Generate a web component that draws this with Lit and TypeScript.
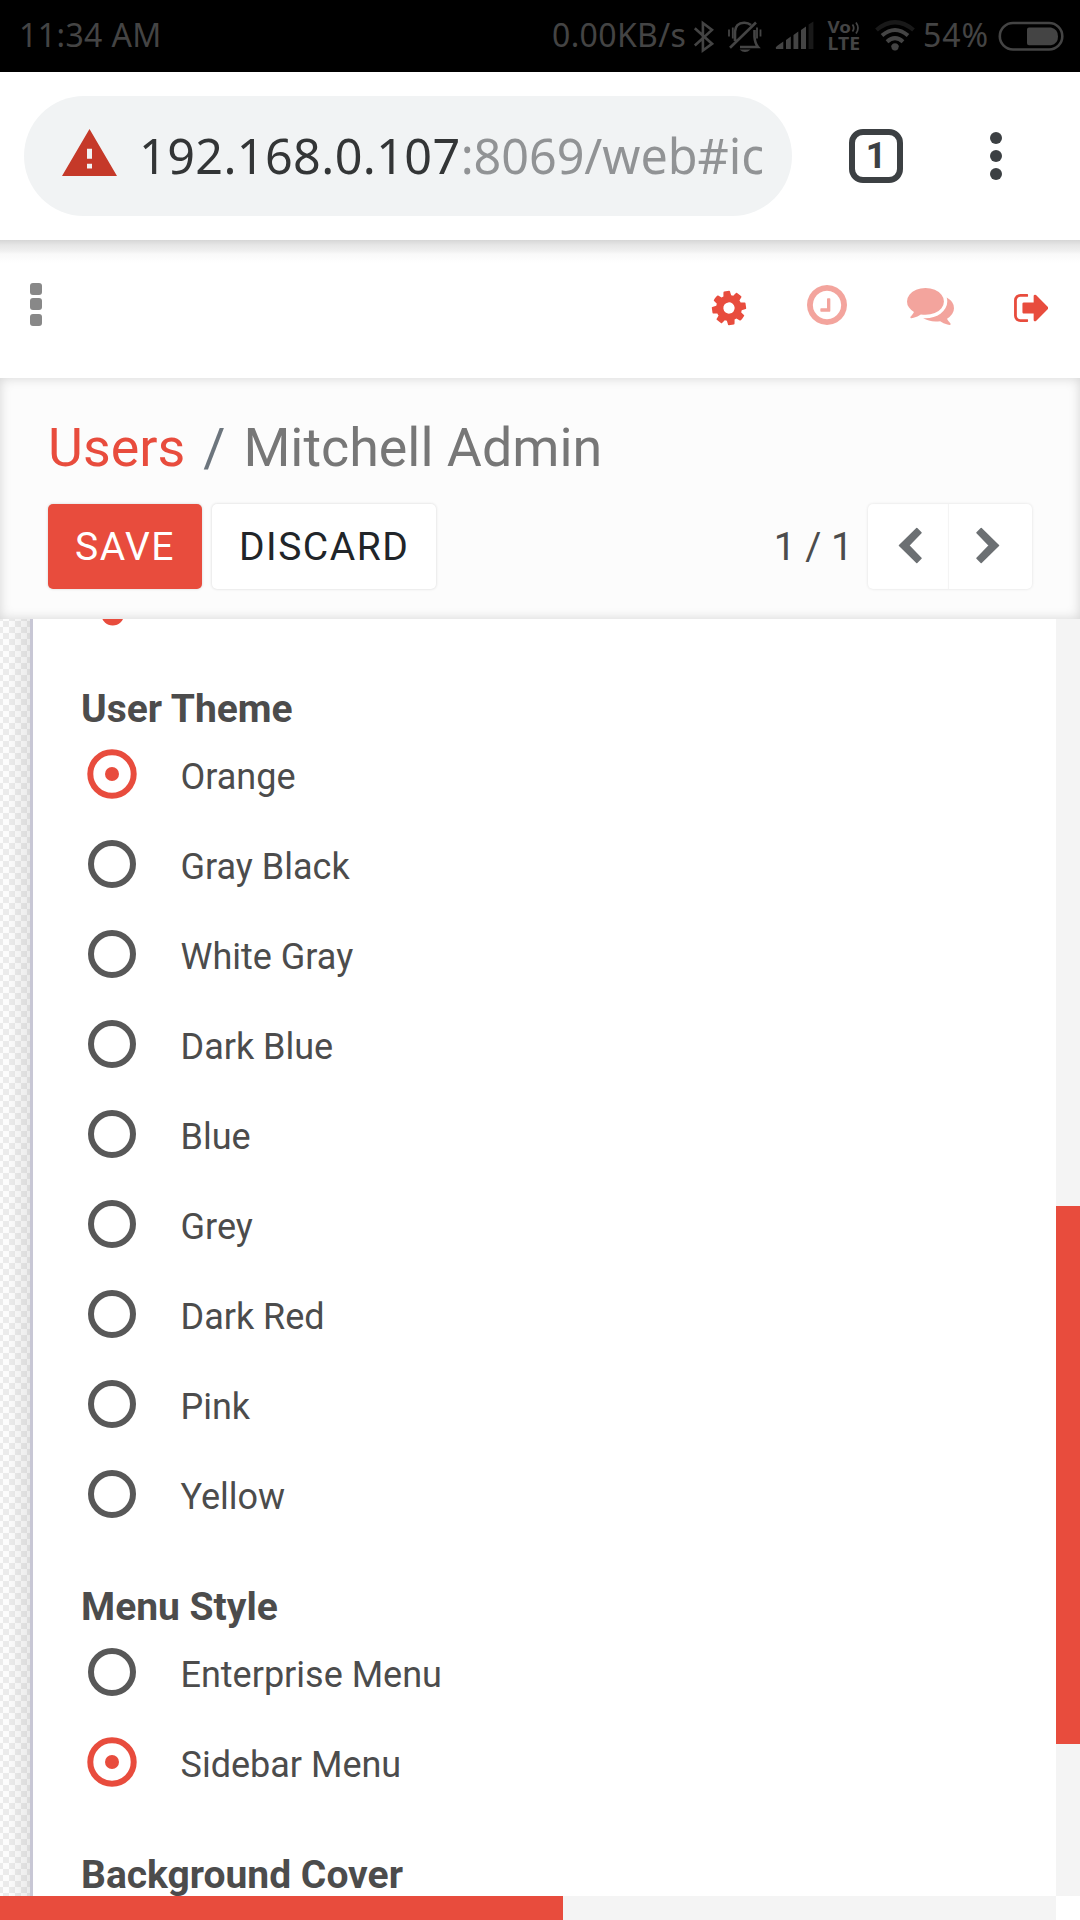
import { LitElement, html, css, svg, nothing } from "lit";
import { customElement, property } from "lit/decorators.js";

const COG =
  "M1024 640q0 106-75 181t-181 75-181-75-75-181 75-181 181-75 181 75 75 181zm512-109v222q0 12-8 23t-20 13l-185 28q-19 54-39 91 35 50 107 138 10 12 10 25t-9 23q-27 37-99 108t-94 71q-12 0-26-9l-138-108q-44 23-91 38-16 136-29 186-7 28-36 28h-222q-14 0-24.5-8.5t-11.5-21.5l-28-184q-49-16-90-37l-141 107q-10 9-25 9-14 0-25-11-126-114-165-168-7-10-7-23 0-12 8-23 15-21 51-66.5t54-70.5q-27-50-41-99l-183-27q-13-2-21-12.5t-8-23.5v-222q0-12 8-23t19-13l186-28q14-46 39-92-40-57-107-138-10-12-10-24 0-10 9-23 26-36 98.5-107.5t94.5-71.5q13 0 26 10l138 107q44-23 91-38 16-136 29-186 7-28 36-28h222q14 0 24.5 8.5t11.5 21.5l28 184q49 16 90 37l142-107q9-9 24-9 13 0 25 10 129 119 165 170 7 8 7 22 0 12-8 23-15 21-51 66.5t-54 70.5q26 50 41 98l183 28q13 2 21 12.5t8 23.5z";
const CLOCK =
  "M896 416v448q0 14-9 23t-23 9h-320q-14 0-23-9t-9-23v-64q0-14 9-23t23-9h224v-352q0-14 9-23t23-9h64q14 0 23 9t9 23zm416 224q0-148-73-273t-198-198-273-73-273 73-198 198-73 273 73 273 198 198 273 73 273-73 198-198 73-273zm224 0q0 209-103 385.5t-279.5 279.5-385.5 103-385.5-103-279.5-279.5-103-385.5 103-385.5 279.5-279.5 385.5-103 385.5 103 279.5 279.5 103 385.5z";
const COMMENTS =
  "M1408 768q0 139-94 257t-256.5 186.5-353.5 68.5q-86 0-176-16-124 88-278 128-36 9-86 16h-3q-11 0-20.5-8t-11.5-21q-1-3-1-6.5t.5-6.5 2-6l2.5-5 3.5-5.5 4-5 4.5-5 4-4.5q5-6 23-25t26-29.5 22.5-29 25-38.5 20.5-44q-124-72-195-177t-71-224q0-139 94-257t256.5-186.5 353.5-68.5 353.5 68.5 256.5 186.5 94 257zm384 256q0 120-71 224.5t-195 176.5q10 24 20.5 44t25 38.5 22.5 29 26 29.5 23 25q1 1 4 4.5t4.5 5 4 5 3.5 5.5l2.5 5 2 6 .5 6.5-1 6.5q-3 14-13 22t-22 7q-50-7-86-16-154-40-278-128-90 16-176 16-271 0-472-132 58 4 88 4 161 0 309-45t264-129q125-92 192-212t67-254q0-77-23-152 129 71 204 178t75 230z";
const SIGN_OUT =
  "M640 1440q0 4 1 20t.5 26.5-3 23.5-10 19.5-20.5 6.5h-320q-119 0-203.5-84.5t-84.5-203.5v-704q0-119 84.5-203.5t203.5-84.5h320q13 0 22.5 9.5t9.5 22.5q0 4 1 20t.5 26.5-3 23.5-10 19.5-20.5 6.5h-320q-66 0-113 47t-47 113v704q0 66 47 113t113 47h312l11.5 1 11.5 3 8 5.5 7 9 2 13.5zm928-544q0 26-19 45l-544 544q-19 19-45 19t-45-19-19-45v-288h-448q-26 0-45-19t-19-45v-384q0-26 19-45t45-19h448v-288q0-26 19-45t45-19 45 19l544 544q19 19 19 45z";

@customElement("status-bar")
class StatusBar extends LitElement {
  static styles = css`
    :host {
      display: flex;
      align-items: center;
      height: 72px;
      box-sizing: border-box;
      padding: 0 16px 0 19px;
      background: #000;
      color: #444;
      font: 32px/40px "Noto Sans", sans-serif;
      white-space: pre;
    }
    .time { flex: 1; padding-bottom: 3px; letter-spacing: 0.4px; }
    .speed { width: 141px; padding-bottom: 3px; letter-spacing: 0.35px; }
    .percent { width: 67px; padding-bottom: 3px; letter-spacing: 1px; }
    svg { display: block; flex: none; }
    .bell { margin-left: 14px; }
    .signal { margin-left: 13px; }
    .volte { margin-left: 13px; }
    .wifi { margin-left: 15px; }
    .percent { margin-left: 8px; }
    .battery { margin-left: 8px; }
    .vo { font: bold 16px "Noto Sans", sans-serif; }
    .lte { font: bold 17.5px "Noto Sans", sans-serif; }
  `;
  render() {
    return html`
      <span class="time">11:34 AM</span>
      <span class="speed">0.00KB/s</span>
      <svg width="21" height="72" viewBox="694 0 21 72" fill="none" stroke="#444" stroke-width="2.6">
        <path d="M695.8 28.2 713 43.8 703.9 50.5V23l9.1 6.9-17.2 15.6" />
      </svg>
      <svg class="bell" width="34" height="72" viewBox="729 0 34 72" fill="none" stroke="#444" stroke-width="2.6">
        <path d="M736 41V31.5Q736.5 23 745 22.7 749 22.500 752 25M755.5 30V37Q756 43.500 759 47H741M731 47.800 757 22.500" />
        <path d="M730 29.500v7M733.800 27.500v11M758 27.500v11M761.500 29.500v7" stroke-width="1.800" />
        <path d="M740.5 49.500h11q-5.500 5-11 0z" fill="#444" stroke="none" />
      </svg>
      <svg class="signal" width="39" height="72" viewBox="776 0 39 72" fill="#444">
        <path d="M777 49q-1-1.500 1-3l6.300-4.500V49zM787 49V40l4.800-3.500V49zM794.500 49V35l4.800-3.500V49zM802 49V30l5-3.500V49z" />
        <path d="M809.600 49V24.500l4.800-3V49z" fill="#191919" />
      </svg>
      <svg class="volte" width="33" height="72" viewBox="828 0 33 72" fill="#444">
        <text class="vo" x="828.500" y="33" textLength="23.500" lengthAdjust="spacingAndGlyphs">Vo</text>
        <text class="lte" x="828.500" y="49.700" textLength="32.500" lengthAdjust="spacingAndGlyphs">LTE</text>
        <path d="M853.500 24.500q2.500 3.500 0 7M857 22.500q4 5.500 0 11" fill="none" stroke="#444" stroke-width="1.700" />
      </svg>
      <svg class="wifi" width="40" height="72" viewBox="875.500 0 40 72" fill="none" stroke="#444" stroke-width="4">
        <path d="M877 31.500Q895.500 16 914 31.500" stroke="#191919" stroke-width="4.200" transform="translate(0 -1.500)" />
        <path d="M882.500 36.500Q895.500 25.500 908.500 36.500" transform="translate(0 -1)" />
        <path d="M887.500 41.700Q895.500 34.500 903.500 41.700" />
        <path d="M891.500 46q4-2.800 8 0l-4 4.500z" fill="#444" stroke="none" />
        <circle cx="895.500" cy="46.800" r="3.600" fill="#444" stroke="none" />
      </svg>
      <span class="percent">54%</span>
      <svg class="battery" width="66" height="72" viewBox="998 0 66 72">
        <rect x="999.800" y="23" width="62.500" height="26.500" rx="13.200" fill="none" stroke="#444" stroke-width="2.600" />
        <path d="M1029 27.500h22q7 1.500 7 9t-7 8.700h-22q-2 0-2-2v-13.700q0-2 2-2z" fill="#444" />
      </svg>
    `;
  }
}

@customElement("browser-bar")
class BrowserBar extends LitElement {
  static styles = css`
    :host {
      display: flex;
      align-items: center;
      height: 168px;
      box-sizing: border-box;
      padding-left: 24px;
      background: #fff;
    }
    .omnibox {
      display: flex;
      align-items: center;
      width: 768px;
      height: 120px;
      box-sizing: border-box;
      padding: 0 30px 0 38px;
      border-radius: 60px;
      background: #f1f3f4;
    }
    .warn { flex: none; margin-bottom: 7px; }
    .url {
      flex: 1;
      min-width: 0;
      margin-left: 22px;
      padding-bottom: 2px;
      overflow: hidden;
      white-space: nowrap;
      color: #333536;
      font: 48.5px/66px "Noto Sans", sans-serif;
      letter-spacing: 0.4px;
    }
    .rest { color: #919395; letter-spacing: -0.05px; }
    .tabs {
      display: flex;
      align-items: center;
      justify-content: center;
      width: 54px;
      height: 54px;
      box-sizing: border-box;
      margin-left: 57px;
      border: 6px solid #3c4043;
      border-radius: 14px;
      color: #3c4043;
      font: bold 36px/42px Roboto, sans-serif;
    }
    .menu { display: grid; gap: 6px; margin-left: 87px; }
    .dot { width: 12px; height: 12px; border-radius: 50%; background: #3c4043; }
  `;
  render() {
    return html`
      <div class="omnibox">
        <svg class="warn" width="55" height="47" viewBox="1 2 22 19" preserveAspectRatio="none" fill="#c53929">
          <path d="M1 21h22L12 2 1 21zm12-3h-2v-2h2v2zm0-4h-2v-4h2v4z" />
        </svg>
        <div class="url">192.168.0.107<span class="rest">:8069/web#ic</span></div>
      </div>
      <div class="tabs">1</div>
      <div class="menu"><i class="dot"></i><i class="dot"></i><i class="dot"></i></div>
    `;
  }
}

@customElement("app-header")
class AppHeader extends LitElement {
  static styles = css`
    :host {
      display: flex;
      align-items: flex-start;
      height: 138px;
      box-sizing: border-box;
      padding: 43px 32px 0 30px;
      background: linear-gradient(#d6d6d6 0, #e6e6e6 5px, #f0f0f0 11px, #f9f9f9 14px, #fff 23px);
    }
    .toggle { display: grid; gap: 3.7px; flex: 1; }
    .sq { width: 11.8px; height: 11.8px; border-radius: 3px; background: #888; }
    svg { display: block; fill: #e84c3d; }
    .cog { margin: 8px 1px 0 0; overflow: visible; fill-rule: evenodd; }
    .clock { margin: 2px 0 0 60px; opacity: 0.5; }
    .chat { margin: 5px 0 0 60px; opacity: 0.5; }
    .out { margin: 11px 0 0 60px; }
  `;
  render() {
    return html`
      <div class="toggle"><i class="sq"></i><i class="sq"></i><i class="sq"></i></div>
      <svg class="cog" width="34" height="34" viewBox="0 -128 1536 1536">
        <path d=${COG} transform="rotate(-8 768 640)" />
      </svg>
      <svg class="clock" width="40" height="40" viewBox="0 -128 1536 1536"><path d=${CLOCK} /></svg>
      <svg class="chat" width="47" height="37" viewBox="0 256 1792 1411"><path d=${COMMENTS} /></svg>
      <svg class="out" width="34.400" height="28" viewBox="0 256 1568 1280"><path d=${SIGN_OUT} /></svg>
    `;
  }
}

@customElement("control-panel")
class ControlPanel extends LitElement {
  static styles = css`
    :host {
      display: block;
      height: 241px;
      box-sizing: border-box;
      padding: 36px 48px 0;
      background: #fcfcfc;
      box-shadow: inset 0 0 12px rgba(0, 0, 0, 0.16);
      font-family: Roboto, sans-serif;
    }
    .crumbs {
      display: flex;
      height: 64px;
      color: #777;
      font-size: 53.8px;
      line-height: 67px;
      white-space: nowrap;
    }
    .link { color: #e84c3d; }
    .sep { padding: 0 18px; color: #6c757d; }
    .row { display: flex; margin-top: 26px; align-items: center; height: 85px; }
    .btn {
      height: 85px;
      box-sizing: border-box;
      border-radius: 5px;
      padding: 0 27px;
      font-size: 39px;
      line-height: 86px;
      letter-spacing: 1.5px;
      background: #fff;
      color: #212529;
      box-shadow: 0 0 3px rgba(0, 0, 0, 0.16);
    }
    .save { width: 154px; margin-right: 10px; background: #e84c3d; color: #fff; }
    .discard { width: 224px; }
    .pager {
      flex: 1;
      padding-right: 15px;
      text-align: right;
      color: #4c4c4c;
      font-size: 39px;
      line-height: 84px;
    }
    .nav {
      display: flex;
      width: 164px;
      height: 85px;
      border-radius: 5px;
      background: #fff;
      box-shadow: 0 0 3px rgba(0, 0, 0, 0.12);
    }
    .cell { display: flex; align-items: center; justify-content: center; box-sizing: border-box; padding-bottom: 3px; }
    .prev { width: 81px; padding-left: 2px; box-shadow: inset -1px 0 1px #f3f3f3; }
    .next { width: 83px; padding-right: 5px; }
    svg { fill: #6c7073; stroke: #6c7073; stroke-width: 1.5; stroke-linejoin: round; }
  `;
  render() {
    const arrow = (flip: boolean) => html`
      <svg width="24" height="37" viewBox="0 0 24 37">
        <path d="M1.500 18.500 18.800 1.500 23 5.700 10.700 18.500 23 31.200 18.800 35.500z" transform=${flip ? "matrix(-1 0 0 1 24 0)" : nothing} />
      </svg>`;
    return html`
      <div class="crumbs">
        <span class="link">Users</span><span class="sep">/</span><span>Mitchell Admin</span>
      </div>
      <div class="row">
        <div class="btn save">SAVE</div>
        <div class="btn discard">DISCARD</div>
        <div class="pager">1 / 1</div>
        <div class="nav">
          <div class="cell prev">${arrow(false)}</div>
          <div class="cell next">${arrow(true)}</div>
        </div>
      </div>
    `;
  }
}

@customElement("radio-group")
class RadioGroup extends LitElement {
  @property() heading = "";
  @property() selected = "";
  @property({ attribute: false }) options: string[] = [];
  static styles = css`
    :host {
      display: block;
      color: #4c4c4c;
      font-family: Roboto, sans-serif;
      white-space: nowrap;
    }
    .heading { font-size: 39px; font-weight: bold; line-height: 46px; }
    .option { display: flex; align-items: center; height: 90px; font-size: 36px; }
    svg { display: block; margin: 0 43.5px 5px 6px; }
    .ring { fill: none; stroke: #585858; stroke-width: 6; }
    .on { stroke: #e84c3d; }
    .dot { fill: #e84c3d; }
  `;
  render() {
    return html`
      <div class="heading">${this.heading}</div>
      ${this.options.map((o) => {
        const on = o === this.selected;
        return html`<div class="option">
          <svg width="50" height="50" viewBox="0 0 50 50">
            <circle class="ring ${on ? "on" : ""}" cx="25" cy="25" r=${on ? 21.7 : 21} />
            ${on ? svg`<circle class="dot" cx="25" cy="25" r="7" />` : nothing}
          </svg>
          <span>${o}</span>
        </div>`;
      })}
    `;
  }
}

@customElement("app-root")
class AppRoot extends LitElement {
  static styles = css`
    :host {
      display: flex;
      flex-direction: column;
      width: 1080px;
      height: 1920px;
      overflow: hidden;
      background: #fff;
    }
    .main { display: flex; height: 1277px; }
    .backdrop {
      width: 30px;
      background: linear-gradient(90deg, rgba(0, 0, 0, 0) 8px, rgba(0, 0, 0, 0.07)),
        repeating-conic-gradient(#ebebeb 0 25%, #fcfcfc 0 50%) -3px 2px / 12px 12px;
    }
    .sheet {
      flex: 1;
      height: 1277px;
      overflow: hidden;
      box-sizing: border-box;
      border-left: 3px solid #c8c7d5;
      padding-left: 48px;
      background: #fff;
    }
    .clipped { display: block; height: 66.7px; margin-left: 20px; }
    .group { margin-bottom: 42px; }
    .track { width: 24px; background: #f4f4f4; }
    .thumb { height: 538px; margin-top: 587px; background: #e84c3d; }
    .bottom { width: 1056px; height: 24px; background: #f4f4f4; }
    .bthumb { width: 563px; height: 24px; background: #e84c3d; }
  `;
  render() {
    return html`
      <status-bar></status-bar>
      <browser-bar></browser-bar>
      <app-header></app-header>
      <control-panel></control-panel>
      <div class="main">
        <div class="backdrop"></div>
        <div class="sheet">
          <svg class="clipped" width="24" height="66.700" viewBox="0 0 24 66.700">
            <circle cx="11.700" cy="-4.700" r="11.300" fill="#e84c3d" />
          </svg>
          <radio-group class="group" heading="User Theme" selected="Orange"
            .options=${["Orange", "Gray Black", "White Gray", "Dark Blue", "Blue", "Grey", "Dark Red", "Pink", "Yellow"]}></radio-group>
          <radio-group class="group" heading="Menu Style" selected="Sidebar Menu"
            .options=${["Enterprise Menu", "Sidebar Menu"]}></radio-group>
          <radio-group heading="Background Cover"></radio-group>
        </div>
        <div class="track"><div class="thumb"></div></div>
      </div>
      <div class="bottom"><div class="bthumb"></div></div>
    `;
  }
}
